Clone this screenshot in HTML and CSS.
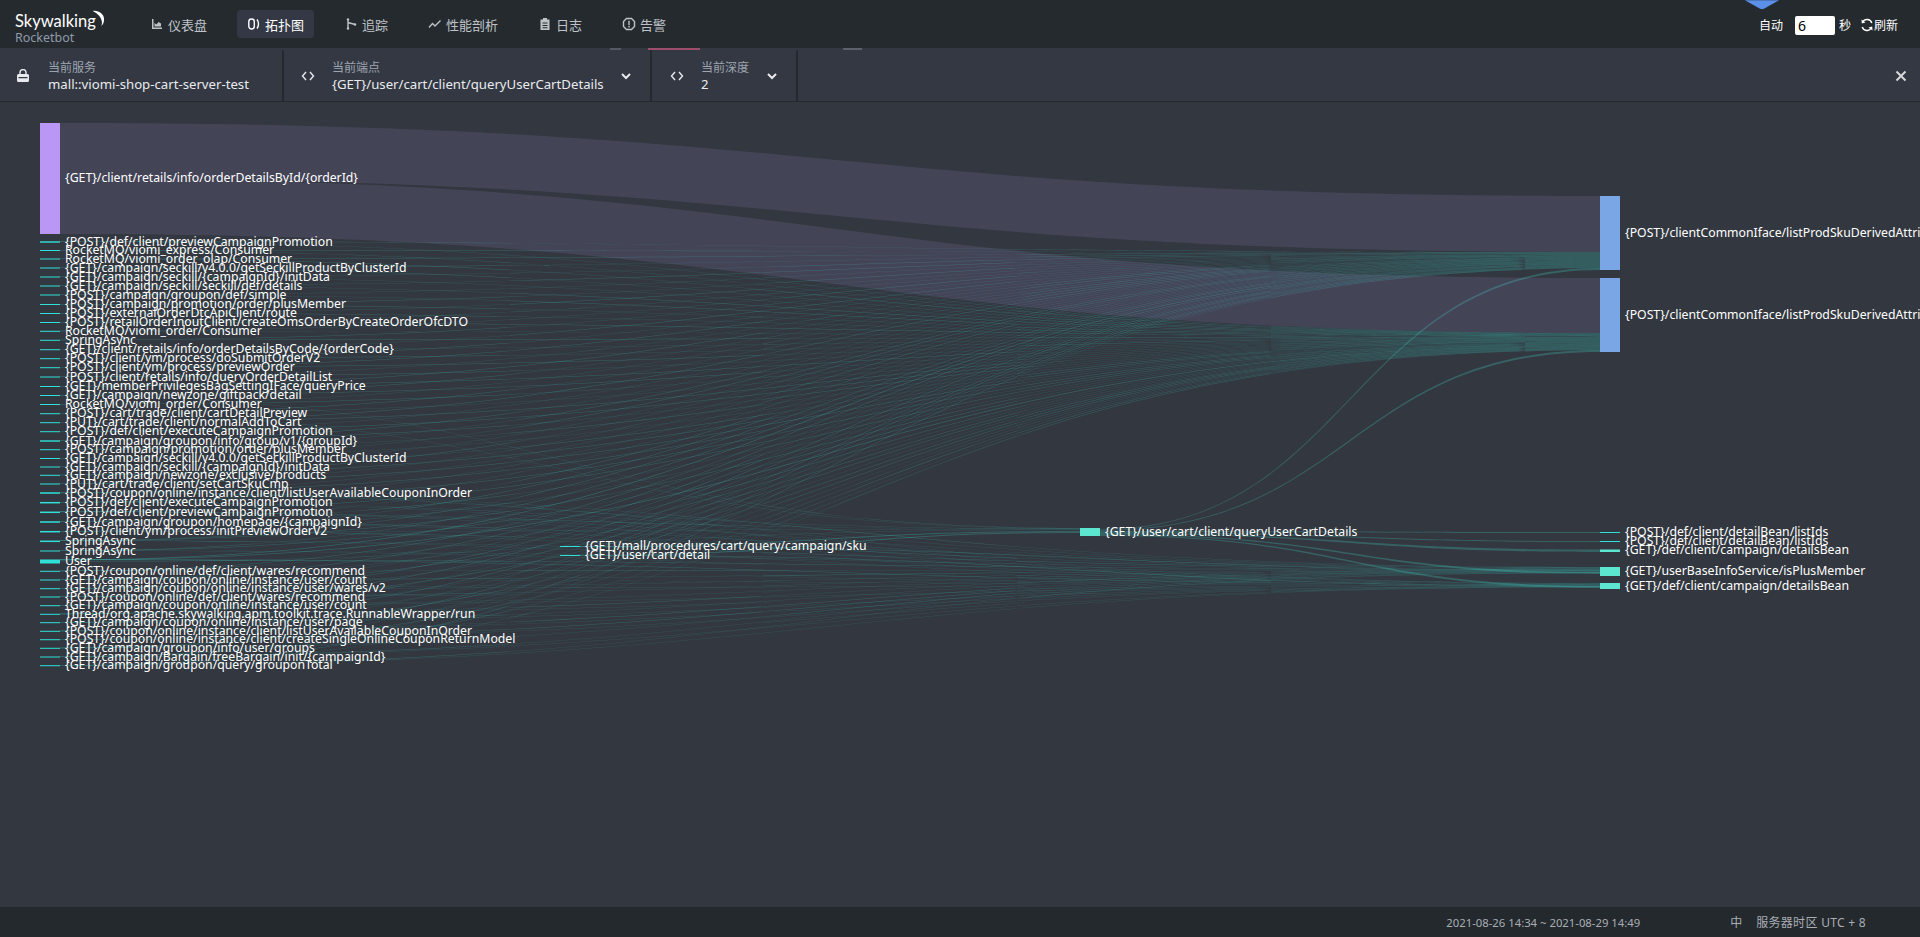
FILE: index.html
```html
<!DOCTYPE html>
<html lang="en">
<head>
  <meta charset="UTF-8" />
  <title>Rocketbot</title>
  <link rel="stylesheet" href="styles.css">
</head>
<body>
  <header class="topbar">
    <div class="logo">
      <div class="logo-name">Skywalking</div>
      <div class="logo-sub">Rocketbot</div>
      <svg class="logo-moon" viewBox="0 0 16 18"><path d="M3 1C9 0 15 4 15 10c0 3-1 5.500-3 7 .8-2 1-4 .4-6C11.500 7 8 3.500 3 1z" /></svg>
    </div>
    <nav class="nav">
      <a class="nav-item"><svg class="nav-icon" viewBox="0 0 14 14"><path d="M2 2h1.500v8.500H12V12H2z" /><path d="M4.500 6l2 1.500L8.500 5 11 6.500v3H4.500z" /></svg>仪表盘</a>
      <a class="nav-item active"><svg class="nav-icon" viewBox="0 0 14 14"><rect x="1.800" y="2" width="5.500" height="10" rx="2.700" class="line" /><path d="M10 2.500c2 2.500 2 6.500 0 9" class="line" /></svg>拓扑图</a>
      <a class="nav-item"><svg class="nav-icon" viewBox="0 0 14 14"><circle cx="4" cy="2.500" r="1.200" /><circle cx="4" cy="11.500" r="1.200" /><circle cx="11" cy="7.500" r="1.200" /><path d="M4 3v8M4 5.500l7 2" class="line" /></svg>追踪</a>
      <a class="nav-item"><svg class="nav-icon" viewBox="0 0 14 14"><path d="M1 10.500l3.500-4 2.500 2.500 5.500-5.500" class="line" /></svg>性能剖析</a>
      <a class="nav-item"><svg class="nav-icon" viewBox="0 0 14 14"><path d="M5 1h4v1.500h2.500V13h-9V2.500H5zM4.500 5.500v1h5v-1zm0 2.500v1h5V8zm0 2.300v1h5v-1z" fill-rule="evenodd" /></svg>日志</a>
      <a class="nav-item"><svg class="nav-icon" viewBox="0 0 14 14"><path d="M4.500 1.500h5l3 3v5l-3 3h-5l-3-3v-5z" class="line" /><path d="M6.300 3.800h1.400v4.400H6.300zM6.300 9h1.400v1.400H6.300z" /></svg>告警</a>
    </nav>
    <div class="refresh">
      <span class="refresh-label">自动</span>
      <input class="refresh-input" value="6" />
      <span>秒</span>
      <svg class="refresh-icon" viewBox="0 0 14 14"><path d="M11.800 5A5 5 0 0 0 2.600 4.200M2.200 9a5 5 0 0 0 9.200.8" class="line" /><path d="M1.500 1.500l.3 4 3.700-1zM12.500 12.500l-.3-4-3.700 1z" /></svg>
      <span>刷新</span>
    </div>
    <svg class="top-badge" viewBox="0 0 40 10"><path d="M2 0h36L22 9q-2 1-4 0z" /></svg>
  </header>

  <section class="toolbar">
    <div class="tool tool-service">
      <svg class="tool-icon" viewBox="0 0 14 14"><path d="M4 6V3.500a3 3 0 0 1 6 0V6" class="line" /><path d="M2.500 5h9A1.500 1.500 0 0 1 13 6.500v5A1.500 1.500 0 0 1 11.500 13h-9A1.500 1.500 0 0 1 1 11.500v-5A1.500 1.500 0 0 1 2.500 5zM2.500 8v1.300h9V8z" fill-rule="evenodd" /></svg>
      <div class="tool-text">
        <div class="tool-label">当前服务</div>
        <div class="tool-value">mall::viomi-shop-cart-server-test</div>
      </div>
    </div>
    <div class="tool tool-endpoint">
      <svg class="tool-icon" viewBox="0 0 14 14"><path d="M5 3L1.500 7 5 11M9 3l3.500 4L9 11" class="line" /></svg>
      <div class="tool-text">
        <div class="tool-label">当前端点</div>
        <div class="tool-value">{GET}/user/cart/client/queryUserCartDetails</div>
      </div>
      <svg class="tool-chevron" viewBox="0 0 12 12"><path d="M2 4l4 4 4-4" class="line" /></svg>
    </div>
    <div class="tool tool-depth">
      <svg class="tool-icon" viewBox="0 0 14 14"><path d="M5 3L1.500 7 5 11M9 3l3.500 4L9 11" class="line" /></svg>
      <div class="tool-text">
        <div class="tool-label">当前深度</div>
        <div class="tool-value">2</div>
      </div>
      <svg class="tool-chevron" viewBox="0 0 12 12"><path d="M2 4l4 4 4-4" class="line" /></svg>
    </div>
    <svg class="tool-close" viewBox="0 0 12 12"><path d="M1.500 1.500l9 9M10.500 1.500l-9 9" class="line" /></svg>
    <i class="peek peek-a"></i>
    <i class="peek peek-b"></i>
    <i class="peek peek-c"></i>
  </section>

  <main class="chart">
    <svg id="sankey" class="sankey" viewBox="0 102 1920 805"></svg>
  </main>

  <footer class="footer">
    <span class="footer-time">2021-08-26 14:34 ~ 2021-08-29 14:49</span>
    <span class="footer-lang">中</span>
    <span class="footer-zone">服务器时区 UTC + 8</span>
  </footer>

  <script src="chart.js"></script>
</body>
</html>
```

FILE: styles.css
```css
* {
  box-sizing: border-box;
}

html, body {
  height: 100%;
}

body {
  margin: 0;
  display: flex;
  flex-direction: column;
  overflow: hidden;
  background-color: #333840;
  color: #fff;
  font-family: "Noto Sans", "Noto Sans CJK SC", sans-serif;
  font-size: 13px;
}

svg path, svg circle, svg rect {
  fill: currentColor;
}

svg .line {
  fill: none;
  stroke: currentColor;
  stroke-width: 1.4;
}

/* === Top bar === */
.topbar {
  position: relative;
  flex: none;
  height: 48px;
  padding-left: 15px;
  display: flex;
  align-items: center;
  background-color: #252a2f;
}

.logo {
  position: relative;
  width: 125px;
  height: 48px;
}

.logo-name {
  position: absolute;
  top: 10px;
  left: 0;
  font-family: "Lato", sans-serif;
  font-size: 16.5px;
  line-height: 22px;
  color: #fff;
}

.logo-sub {
  position: absolute;
  top: 30px;
  left: 0;
  font-size: 12.5px;
  line-height: 16px;
  color: #8f9bab;
}

.logo-moon {
  position: absolute;
  top: 10px;
  left: 75px;
  width: 15px;
  height: 17px;
  color: #fff;
}

.nav {
  display: flex;
  gap: 20px;
}

.nav-item {
  height: 28px;
  padding: 0 10px;
  display: flex;
  align-items: center;
  gap: 4px;
  border-radius: 4px;
  color: #bfc3c8;
}

.nav-item.active {
  background-color: #333844;
  color: #fff;
}

.nav-icon {
  width: 14px;
  height: 14px;
}

.refresh {
  margin-left: auto;
  padding: 2px 22px 0 0;
  display: flex;
  align-items: center;
  font-size: 12px;
}

.refresh-input {
  width: 40px;
  height: 19px;
  margin: 0 4px 0 12px;
  padding: 0 3px;
  border: 0;
  border-radius: 2px;
  background-color: #fff;
  color: #000;
  font-family: inherit;
  font-size: 14px;
}

.refresh-icon {
  width: 14px;
  height: 14px;
  margin-left: 9px;
}

.top-badge {
  position: absolute;
  top: 0;
  left: 1743px;
  width: 38px;
  height: 10px;
  color: #5b8fe8;
}

/* === Service / endpoint / depth selector === */
.toolbar {
  position: relative;
  flex: none;
  height: 54px;
  padding-top: 2px;
  display: flex;
  align-items: center;
  background-color: #333843;
  border-bottom: 1px solid #25292e;
}

.tool {
  height: 100%;
  display: flex;
  align-items: center;
  border-right: 2px solid #25292e;
}

.tool-service {
  width: 284px;
  padding-left: 16px;
}

.tool-endpoint {
  width: 368px;
  padding-left: 17px;
}

.tool-depth {
  width: 146px;
  padding-left: 18px;
}

.tool-icon {
  flex: none;
  width: 14px;
  height: 14px;
  margin-right: 18px;
  color: #e8eaed;
}

.tool-endpoint .tool-icon,
.tool-depth .tool-icon {
  margin-right: 17px;
}

.tool-label {
  font-size: 12px;
  line-height: 16px;
  color: #9ea5b0;
}

.tool-value {
  font-size: 13.2px;
  line-height: 16px;
  color: #e9ebee;
}

.tool-chevron {
  width: 12px;
  height: 12px;
  margin-left: auto;
  margin-right: 18px;
  color: #e8eaed;
}

.tool-chevron .line {
  stroke-width: 2;
}

.tool-close {
  width: 12px;
  height: 12px;
  margin-left: auto;
  margin-right: 13px;
  color: #d8d8d8;
}

.tool-close .line {
  stroke-width: 2;
}

.peek {
  position: absolute;
  top: 0;
  height: 2px;
}

.peek-a {
  left: 610px;
  width: 11px;
  background-color: #555a62;
}

.peek-b {
  left: 648px;
  width: 52px;
  background-color: #9c4f6c;
}

.peek-c {
  left: 843px;
  width: 19px;
  background-color: #5d626a;
}

/* === Sankey === */
.chart {
  flex: 1;
  min-height: 0;
}

.sankey {
  display: block;
  width: 100%;
  height: 100%;
}

.sankey .node-purple { fill: #bb97f5; }
.sankey .node-blue { fill: #7ba6e6; }
.sankey .node-teal { fill: #5ce6cf; }
.sankey .node-thin { fill: #30e0d6; }

.sankey .link-purple {
  fill: #bb97f5;
  opacity: 0.13;
}

.sankey .link-teal {
  fill: #45e0d0;
  opacity: 0.25;
}

.sankey text {
  fill: #fff;
  font-family: "Noto Sans", sans-serif;
  font-size: 12.25px;
}

/* === Footer === */
.footer {
  flex: none;
  height: 30px;
  padding-right: 54px;
  display: flex;
  align-items: center;
  justify-content: flex-end;
  background-color: #24292e;
  color: #a9aeb5;
  font-size: 12px;
}

.footer-time {
  font-size: 11.3px;
}

.footer-lang {
  margin: 0 14px 0 90px;
}

.footer-zone {
  letter-spacing: 0.3px;
}
```

FILE: chart.js
```js
// Node names and label positions, read top to bottom
const leftNodes = [
  ['{POST}/def/client/previewCampaignPromotion', 242, 1.4],
  ['RocketMQ/viomi_express/Consumer', 250.5],
  ['RocketMQ/viomi_order_olap/Consumer', 259],
  ['{GET}/campaign/seckill/v4.0.0/getSeckillProductByClusterId', 268],
  ['{GET}/campaign/seckill/{campaignId}/initData', 277],
  ['{GET}/campaign/seckill/seckill/def/details', 286],
  ['{POST}/campaign/groupon/def/simple', 295],
  ['{POST}/campaign/promotion/order/plusMember', 304.5],
  ['{POST}/externalOrderDtcApiClient/route', 313.5],
  ['{POST}/retailOrderInoutClient/createOmsOrderByCreateOrderOfcDTO', 322.5],
  ['RocketMQ/viomi_order/Consumer', 331.3],
  ['SpringAsync', 340.3],
  ['{GET}/client/retails/info/orderDetailsByCode/{orderCode}', 349.7],
  ['{POST}/client/ym/process/doSubmitOrderV2', 358.7],
  ['{POST}/client/ym/process/previewOrder', 367.7],
  ['{POST}/client/retails/info/queryOrderDetailList', 377],
  ['{GET}/memberPrivilegesBagSettingIFace/queryPrice', 386.5],
  ['{GET}/campaign/newzone/giftpack/detail', 395.5],
  ['RocketMQ/viomi_order/Consumer', 404.5],
  ['{POST}/cart/trade/client/cartDetailPreview', 413.7],
  ['{PUT}/cart/trade/client/normalAddToCart', 422.7],
  ['{POST}/def/client/executeCampaignPromotion', 431.7],
  ['{GET}/campaign/groupon/info/group/v1/{groupId}', 441, 1.4],
  ['{POST}/campaign/promotion/order/plusMember', 449.7],
  ['{GET}/campaign/seckill/v4.0.0/getSeckillProductByClusterId', 458.5],
  ['{GET}/campaign/seckill/{campaignId}/initData', 467],
  ['{GET}/campaign/newzone/exclusive/products', 475.3],
  ['{PUT}/cart/trade/client/setCartSkuCmp', 484],
  ['{POST}/coupon/online/instance/client/listUserAvailableCouponInOrder', 493, 1.5],
  ['{POST}/def/client/executeCampaignPromotion', 502.7, 1.5],
  ['{POST}/def/client/previewCampaignPromotion', 512.3, 1.5],
  ['{GET}/campaign/groupon/homepage/{campaignId}', 522, 1.5],
  ['{POST}/client/ym/process/initPreviewOrderV2', 531.7, 1.5],
  ['SpringAsync', 541.3, 1.5],
  ['SpringAsync', 551],
  ['User', 561.5, 4],
  ['{POST}/coupon/online/def/client/wares/recommend', 571.3],
  ['{GET}/campaign/coupon/online/instance/user/count', 580],
  ['{GET}/campaign/coupon/online/instance/user/wares/v2', 588.7],
  ['{POST}/coupon/online/def/client/wares/recommend', 597],
  ['{GET}/campaign/coupon/online/instance/user/count', 605.7],
  ['Thread/org.apache.skywalking.apm.toolkit.trace.RunnableWrapper/run', 614.3],
  ['{GET}/campaign/coupon/online/instance/user/page', 622.7],
  ['{POST}/coupon/online/instance/client/listUserAvailableCouponInOrder', 631.3],
  ['{POST}/coupon/online/instance/client/createSingleOnlineCouponReturnModel', 639.7],
  ['{GET}/campaign/groupon/info/user/groups', 648.3],
  ['{GET}/campaign/Bargain/freeBargain/init/{campaignId}', 657],
  ['{GET}/campaign/groupon/query/grouponTotal', 665.7]
];

// [label, x, top, bottom, colour class]
const otherNodes = [
  ['{GET}/client/retails/info/orderDetailsById/{orderId}', 40, 123, 234, 'node-purple'],
  ['{POST}/clientCommonIface/listProdSkuDerivedAttributes', 1600, 196, 270, 'node-blue'],
  ['{POST}/clientCommonIface/listProdSkuDerivedAttributes', 1600, 278, 352, 'node-blue'],
  ['{GET}/mall/procedures/cart/query/campaign/sku', 560, 546, 547, 'node-thin'],
  ['{GET}/user/cart/detail', 560, 555, 556, 'node-thin'],
  ['{GET}/user/cart/client/queryUserCartDetails', 1080, 528, 536, 'node-teal'],
  ['{POST}/def/client/detailBean/listIds', 1600, 532, 533, 'node-thin'],
  ['{POST}/def/client/detailBean/listIds', 1600, 541, 542, 'node-thin'],
  ['{GET}/def/client/campaign/detailsBean', 1600, 549.5, 552, 'node-teal'],
  ['{GET}/userBaseInfoService/isPlusMember', 1600, 567, 576, 'node-teal'],
  ['{GET}/def/client/campaign/detailsBean', 1600, 583, 589, 'node-teal']
];

const svg = document.getElementById('sankey');
const NS = 'http://www.w3.org/2000/svg';

function add(tag, attrs, text) {
  const el = document.createElementNS(NS, tag);
  Object.keys(attrs).forEach(k => el.setAttribute(k, attrs[k]));
  if (text) el.textContent = text;
  svg.appendChild(el);
}

// Ribbon between two vertical edges, control points half way across
function ribbon(x0, y0, x1, y1, h0, h1, cls) {
  const mx = (x0 + x1) / 2;
  const d = `M${x0} ${y0}C${mx} ${y0} ${mx} ${y1} ${x1} ${y1}` +
    `L${x1} ${y1 + h1}C${mx} ${y1 + h1} ${mx} ${y0 + h0} ${x0} ${y0 + h0}Z`;
  add('path', { d: d, class: cls });
}

// The two big flows out of orderDetailsById
ribbon(60, 123, 1600, 196, 55.5, 56, 'link-purple');
ribbon(60, 178.5, 1600, 278, 55.5, 55, 'link-purple');

// Ports on the receiving nodes, filled in the order of the sources.
// The last two only take calls from the lower half of the list.
const ports = [
  { y: 252, h: 0.334, from: 0 },
  { y: 333, h: 0.354, from: 0 },
  { y: 567, h: 0.3, from: 28 },
  { y: 583, h: 0.2, from: 28 }
];

leftNodes.forEach((n, i) => {
  const thick = n[2] || 1;
  ports.forEach(p => {
    if (i < p.from) return;
    const h = p.h * (thick > 2 ? 2 : 1);
    ribbon(60, n[1] - thick / 2, 1600, p.y, h * 1.1, h, 'link-teal');
    p.y += h;
  });
});

// Sources that also call queryUserCartDetails
[17, 19, 28, 30, 32, 35].forEach((i, k) => {
  ribbon(60, leftNodes[i][1], 1080, 528 + k * 0.3, 0.3, 0.3, 'link-teal');
});
ribbon(580, 546, 1080, 531, 1, 1, 'link-teal');
ribbon(580, 555, 1080, 532, 1, 1, 'link-teal');
ribbon(580, 546, 1600, 570, 0.5, 0.5, 'link-teal');
ribbon(580, 555, 1600, 586, 0.5, 0.5, 'link-teal');

// What queryUserCartDetails calls
ribbon(1100, 529, 1600, 268, 0.7, 2, 'link-teal');
ribbon(1100, 530, 1600, 350, 0.7, 2, 'link-teal');
ribbon(1100, 531, 1600, 532, 1, 1, 'link-teal');
ribbon(1100, 532, 1600, 541, 1, 1, 'link-teal');
ribbon(1100, 533, 1600, 549.5, 1, 2.5, 'link-teal');
ribbon(1100, 534, 1600, 572, 1, 2, 'link-teal');
ribbon(1100, 535, 1600, 586, 1, 2, 'link-teal');

// Nodes and labels go on top of the links
leftNodes.forEach(n => {
  const thick = n[2] || 1;
  add('rect', { x: 40, y: n[1] - thick / 2, width: 20, height: thick, class: 'node-thin' });
  add('text', { x: 65, y: n[1] + 3.5 }, n[0]);
});

otherNodes.forEach(n => {
  add('rect', { x: n[1], y: n[2], width: 20, height: n[3] - n[2], class: n[4] });
  add('text', { x: n[1] + 25, y: (n[2] + n[3]) / 2 + 3.5 }, n[0]);
});
```
